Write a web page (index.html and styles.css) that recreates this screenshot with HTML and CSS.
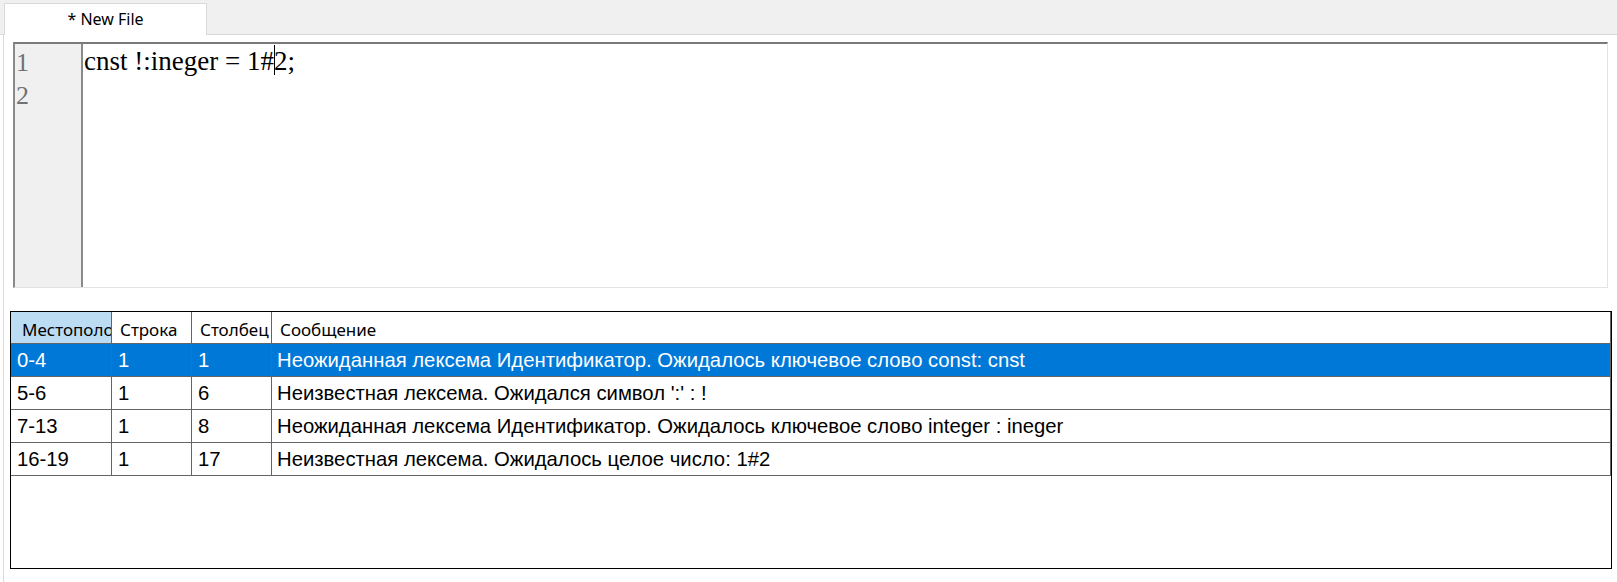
FILE: index.html
```html
<!DOCTYPE html>
<html>
<head>
<meta charset="utf-8">
<link rel="stylesheet" href="styles.css">
</head>
<body>
<div class="window">
  <div class="tabbar">
    <div class="tab">* New File</div>
  </div>
  <div class="content">
    <div class="editor">
      <div class="gutter">
        <div class="ln">1</div>
        <div class="ln">2</div>
      </div>
      <div class="code">
        <div class="line">cnst !:ineger = 1#<span class="caret"></span>2;</div>
        <div class="line"></div>
      </div>
    </div>
    <div class="table">
      <div class="row head">
        <div class="cell sel-head">Местоположение</div>
        <div class="cell">Строка</div>
        <div class="cell">Столбец</div>
        <div class="cell">Сообщение</div>
      </div>
      <div class="row data selected">
        <div class="cell">0-4</div>
        <div class="cell">1</div>
        <div class="cell">1</div>
        <div class="cell">Неожиданная лексема Идентификатор. Ожидалось ключевое слово const: cnst</div>
      </div>
      <div class="row data">
        <div class="cell">5-6</div>
        <div class="cell">1</div>
        <div class="cell">6</div>
        <div class="cell">Неизвестная лексема. Ожидался символ ':' : !</div>
      </div>
      <div class="row data">
        <div class="cell">7-13</div>
        <div class="cell">1</div>
        <div class="cell">8</div>
        <div class="cell">Неожиданная лексема Идентификатор. Ожидалось ключевое слово integer : ineger</div>
      </div>
      <div class="row data">
        <div class="cell">16-19</div>
        <div class="cell">1</div>
        <div class="cell">17</div>
        <div class="cell">Неизвестная лексема. Ожидалось целое число: 1#2</div>
      </div>
    </div>
  </div>
</div>
</body>
</html>
```
FILE: styles.css
```css
html, body {
  margin: 0;
  padding: 0;
  background: #ffffff;
}
.window {
  width: 1617px;
  height: 582px;
  overflow: hidden;
  font-family: "Noto Sans", "Open Sans", sans-serif;
}
.tabbar {
  height: 32px;
  padding-top: 2px;
  padding-left: 4px;
  background: #f0f0f0;
  border-bottom: 1px solid #d9d9d9;
  display: flex;
  align-items: flex-end;
}
.tab {
  width: 203px;
  height: 32px;
  margin-bottom: -1px;
  background: #ffffff;
  border: 1px solid #d9d9d9;
  border-bottom: none;
  display: flex;
  align-items: center;
  justify-content: center;
  font-size: 16px;
  color: #000;
  box-sizing: border-box;
  padding-bottom: 1px;
}
.content {
  margin-left: 3px;
  border-left: 1px solid #dadada;
  height: 547px;
  padding-top: 7px;
  box-sizing: border-box;
}
.editor {
  margin-left: 9px;
  width: 1595px;
  height: 246px;
  box-sizing: border-box;
  border-top: 2px solid #7a7a7a;
  border-left: 2px solid #8a8a8a;
  border-right: 1px solid #e3e3e3;
  border-bottom: 1px solid #e3e3e3;
  display: flex;
  background: #fff;
}
.gutter {
  background: #f0f0f0;
  border-right: 2px solid #8a8a8a;
  font-family: "Liberation Serif", serif;
  font-size: 26px;
  color: #727272;
  padding-top: 2px;
  padding-left: 1px;
  box-sizing: border-box;
  flex: none;
  width: 68px;
}
.ln {
  height: 33px;
  line-height: 33px;
}
.code {
  flex: 1;
  padding-top: 1px;
  padding-left: 1px;
  font-family: "Liberation Serif", serif;
  font-size: 27px;
  color: #000;
}
.line {
  height: 33px;
  line-height: 33px;
  white-space: pre;
}
.caret {
  display: inline-block;
  width: 1px;
  height: 30px;
  background: #000;
  vertical-align: -5px;
  margin-right: -1px;
}
.table {
  margin-top: 23px;
  margin-left: 6px;
  width: 1602px;
  height: 258px;
  box-sizing: border-box;
  border: 1px solid #000;
  background: #fff;
}
.row {
  display: grid;
  grid-template-columns: 101px 80px 80px 1fr;
  border-bottom: 1px solid #646464;
  border-right: 1px solid #646464;
}
.row.head {
  height: 31px;
  font-family: "Noto Sans", "Open Sans", sans-serif;
  font-size: 17px;
}
.row.data {
  height: 32px;
  font-family: "Liberation Sans", Arial, sans-serif;
  font-size: 20.3px;
}
.cell {
  border-right: 1px solid #646464;
  white-space: nowrap;
  overflow: hidden;
  display: flex;
  align-items: center;
  padding-left: 6px;
  color: #000;
}
.row.head .cell {
  padding-left: 8px;
  padding-top: 4px;
}
.row.head .cell.sel-head {
  background: #bcdcf4;
  padding-left: 11px;
}
.row.head .cell:last-child {
  padding-left: 8px;
}
.cell:last-child {
  border-right: none;
  padding-left: 5px;
}
.row.selected {
  background: #0078d7;
}
.row.selected .cell {
  color: #fff;
}
```
